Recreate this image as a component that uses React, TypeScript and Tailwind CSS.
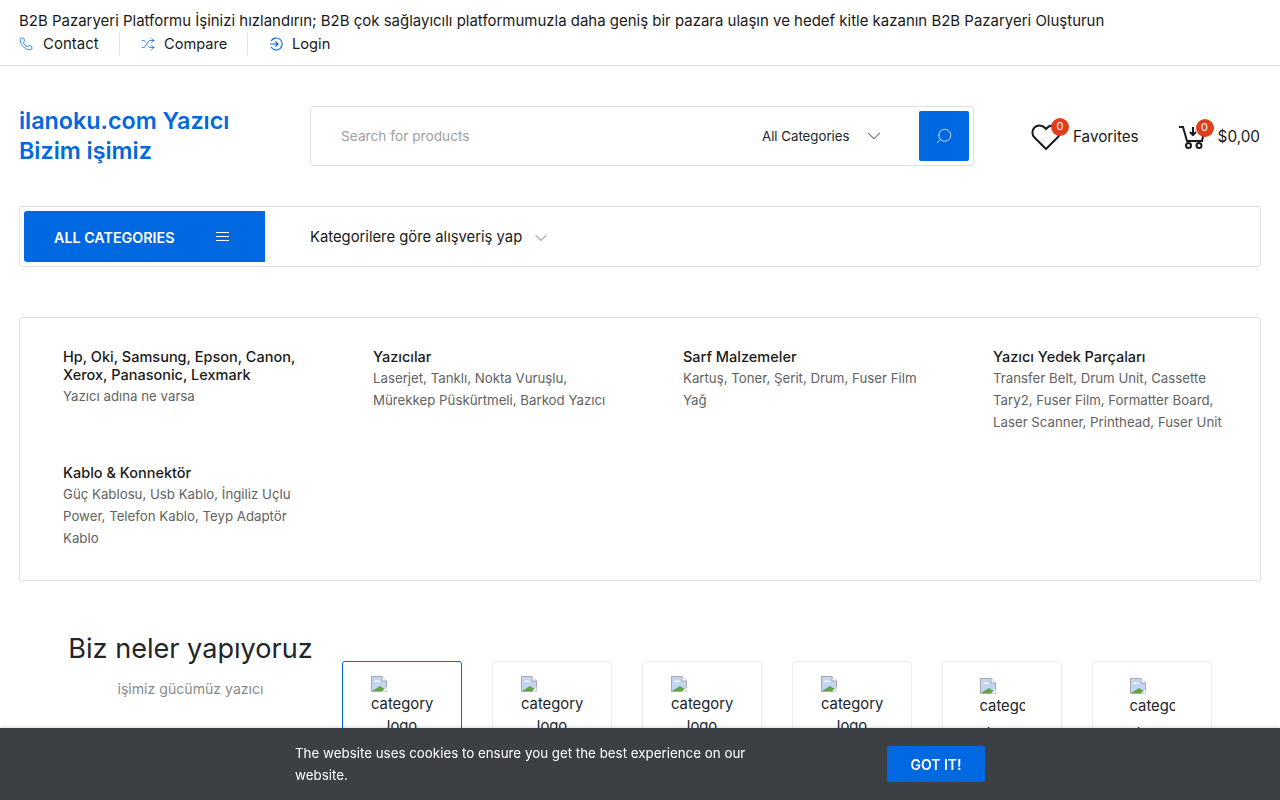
import React from 'react';
import { ChevronDown, Shuffle, Phone, Search } from 'lucide-react';

const categories = [
  { title: 'Hp, Oki, Samsung, Epson, Canon, Xerox, Panasonic, Lexmark', text: 'Yazıcı adına ne varsa' },
  { title: 'Yazıcılar', text: 'Laserjet, Tanklı, Nokta Vuruşlu, Mürekkep Püskürtmeli, Barkod Yazıcı' },
  { title: 'Sarf Malzemeler', text: 'Kartuş, Toner, Şerit, Drum, Fuser Film Yağ' },
  { title: 'Yazıcı Yedek Parçaları', text: 'Transfer Belt, Drum Unit, Cassette Tary2, Fuser Film, Formatter Board, Laser Scanner, Printhead, Fuser Unit' },
  { title: 'Kablo & Konnektör', text: 'Güç Kablosu, Usb Kablo, İngiliz Uçlu Power, Telefon Kablo, Teyp Adaptör Kablo' },
];

const BrokenImage = () => (
  <svg width="16" height="16" viewBox="0 0 16 16" className="block">
    <path d="M0.5 0.5H11L15.5 5V15.500H0.5Z" fill="#c3d4f5" stroke="#a8a8a8" />
    <path d="M11 0.5V5H15.5" fill="#fff" stroke="#a8a8a8" />
    <path d="M3 6c1-2 3-2 4-1 1-.5 2 0 2 1Z" fill="#fff" />
    <path d="M1 15l8-5 3 2 3 1v2Z" fill="#5fa845" />
    <path d="M11 15.500 15.500 11V15.500Z" fill="#fff" />
  </svg>
);

const CategoryCard = ({ active, narrow }: { active?: boolean; narrow?: boolean }) => (
  <div className={`w-[120px] h-[120px] shrink-0 rounded-[3px] border bg-white ${active ? 'border-[#0068e1]' : 'border-[#ededed]'}`}>
    {narrow ? (
      <div className="mx-auto mt-[16px] w-[45px] h-[80px] overflow-hidden text-[14.8px] leading-[24px] text-[#212529]">
        <BrokenImage />
        <div className="w-[70px]">category</div>
        <div className="w-[45px] mt-[3px] text-center">logo</div>
      </div>
    ) : (
      <div className="ml-[28px] mt-[14px] w-[62px] text-center text-[14.8px] leading-[22px] text-[#212529]">
        <BrokenImage />
        <div className="mt-[1px]">category</div>
        <div>logo</div>
      </div>
    )}
  </div>
);

export default function App() {
  return (
    <div className="h-screen overflow-hidden bg-white text-[#1a1a1a] font-['Inter','Liberation_Sans',sans-serif]">
      <div className="h-[66px] border-b border-[#e1e1e1] px-[19px] pt-[10px] text-[14.97px]">
        <div className="h-[22px] leading-[22px] whitespace-nowrap">
          B2B Pazaryeri Platformu İşinizi hızlandırın; B2B çok sağlayıcılı platformumuzla daha geniş bir pazara ulaşın ve hedef kitle kazanın B2B Pazaryeri Oluşturun
        </div>
        <div className="flex items-center h-[24px] leading-[24px]">
          <div className="flex items-center gap-[10px] w-[101px] border-r border-[#e1e1e1] h-[22px]">
            <Phone size={14} strokeWidth={1.3} className="text-[#0068e1]" />
            <span>Contact</span>
          </div>
          <div className="flex items-center gap-[9px] w-[128px] pl-[21px] border-r border-[#e1e1e1] h-[22px] text-[14.6px]">
            <Shuffle size={14} strokeWidth={1.4} className="text-[#0068e1]" />
            <span>Compare</span>
          </div>
          <div className="flex items-center gap-[9px] pl-[21px] h-[22px] text-[14.7px]">
            <svg width="14" height="14" viewBox="0 0 14 14" fill="none" stroke="#0068e1" strokeWidth="1.100">
              <path d="M2 4a6 6 0 1 1 0 6" />
              <path d="M1 7h8M6.500 4.500 9 7l-2.500 2.500" />
            </svg>
            <span>Login</span>
          </div>
        </div>
      </div>

      <div className="flex items-center h-[140px] px-[19px]">
        <div className="w-[291px] shrink-0 text-[23.3px] leading-[30px] font-semibold text-[#0068e1]">
          ilanoku.com Yazıcı
          <br />
          Bizim işimiz
        </div>
        <div className="flex items-center w-[664px] shrink-0 h-[60px] rounded-[3px] border border-[#e1e1e1] pl-[30px] pr-[4px]">
          <div className="flex-1 text-[13.7px] text-[#a0a0a0]">Search for products</div>
          <div className="flex items-center text-[13.25px] text-[#212529] w-[157px]">
            <span className="w-[101px] pt-[1px]">All Categories</span>
            <ChevronDown size={22} strokeWidth={1.1} className="text-[#555]" />
          </div>
          <div className="flex items-center justify-center w-[50px] h-[50px] rounded-[2px] bg-[#0068e1]">
            <Search size={18} strokeWidth={1} className="text-white -scale-x-100" />
          </div>
        </div>
        <div className="flex items-center shrink-0 ml-[57px] pt-[1px] text-[15.2px]">
          <div className="relative mr-[12px]">
            <svg width="30" height="28" viewBox="0 0 30 28" fill="none" stroke="#1a1a1a" strokeWidth="2" className="block">
              <path d="M15 26 3.500 14.500a7 7 0 0 1 0-10 7 7 0 0 1 10 0L15 6l1.500-1.500a7 7 0 0 1 10 0 7 7 0 0 1 0 10Z" />
            </svg>
            <span className="absolute -top-[5px] left-[20px] flex items-center justify-center w-[18px] h-[18px] rounded-full bg-[#e23e1d] text-[11px] text-white">0</span>
          </div>
          <span className="pt-[1px]">Favorites</span>
          <div className="relative ml-[39px] mr-[12px]">
            <svg width="28" height="24" viewBox="0 0 28 24" fill="none" stroke="#1a1a1a" strokeWidth="2" className="block">
              <path d="M1 2h4l4 14h15l2-9" />
              <path d="M15 2v7M12 7l3 3 3-3" />
              <circle cx="10.500" cy="20.500" r="2.500" />
              <circle cx="21" cy="20.500" r="2.500" />
            </svg>
            <span className="absolute -top-[6px] left-[18px] flex items-center justify-center w-[18px] h-[18px] rounded-full bg-[#e23e1d] text-[11px] text-white">0</span>
          </div>
          <span className="pt-[1px] text-[15.3px]">$0,00</span>
        </div>
      </div>

      <div className="mx-[19px] flex items-center h-[61px] rounded-[3px] border border-[#e1e1e1] pl-[4px]">
        <div className="flex items-center justify-between w-[241px] h-[51px] rounded-l-[3px] bg-[#0068e1] pl-[30px] pr-[36px] text-[14.3px] font-semibold text-white">
          <span className="pt-[2px]">ALL CATEGORIES</span>
          <svg width="13" height="11" viewBox="0 0 13 11" stroke="#fff" strokeWidth="1">
            <path d="M0 1.500h13M0 5.500h13M0 9.500h13" />
          </svg>
        </div>
        <div className="flex items-center ml-[45px] text-[14.8px]">
          <span className="pt-[1px]">Kategorilere göre alışveriş yap</span>
          <ChevronDown size={20} strokeWidth={1} className="ml-[9px] mt-[2px] text-[#555]" />
        </div>
      </div>

      <div className="mx-[19px] mt-[50px] grid grid-cols-[repeat(4,310px)] content-start gap-y-[31px] h-[264px] rounded-[3px] border border-[#e1e1e1] pt-[30px] pl-[43px]">
        {categories.map((c) => (
          <div key={c.title} className="w-[240px]">
            <div className="text-[14.5px] leading-[18px] font-medium">{c.title}</div>
            <div className="mt-[1px] text-[13.25px] leading-[22px] text-[#626262]">{c.text}</div>
          </div>
        ))}
      </div>

      <div className="flex mt-[50px] pl-[19px]">
        <div className="w-[343px] pt-[1px] text-center">
          <div className="text-[27.1px] leading-[34px] text-[#212529]">Biz neler yapıyoruz</div>
          <div className="mt-[12px] text-[14.1px] text-[#8a8a8a]">işimiz gücümüz yazıcı</div>
        </div>
        <div className="flex gap-[30px] -ml-[20px] mt-[30px]">
          <CategoryCard active />
          <CategoryCard />
          <CategoryCard />
          <CategoryCard />
          <CategoryCard narrow />
          <CategoryCard narrow />
        </div>
      </div>

      <div className="fixed left-0 right-0 bottom-0 flex items-center h-[72px] bg-[#3c4044] pl-[295px] shadow-[0_-1px_3px_rgba(0,0,0,0.15)]">
        <div className="w-[500px] text-[13.35px] leading-[22px] text-white">
          The website uses cookies to ensure you get the best experience on our website.
        </div>
        <div className="flex items-center justify-center ml-[92px] w-[98px] h-[36px] rounded-[2px] bg-[#0068e1] text-[14px] font-semibold text-white">
          GOT IT!
        </div>
      </div>
    </div>
  );
}
